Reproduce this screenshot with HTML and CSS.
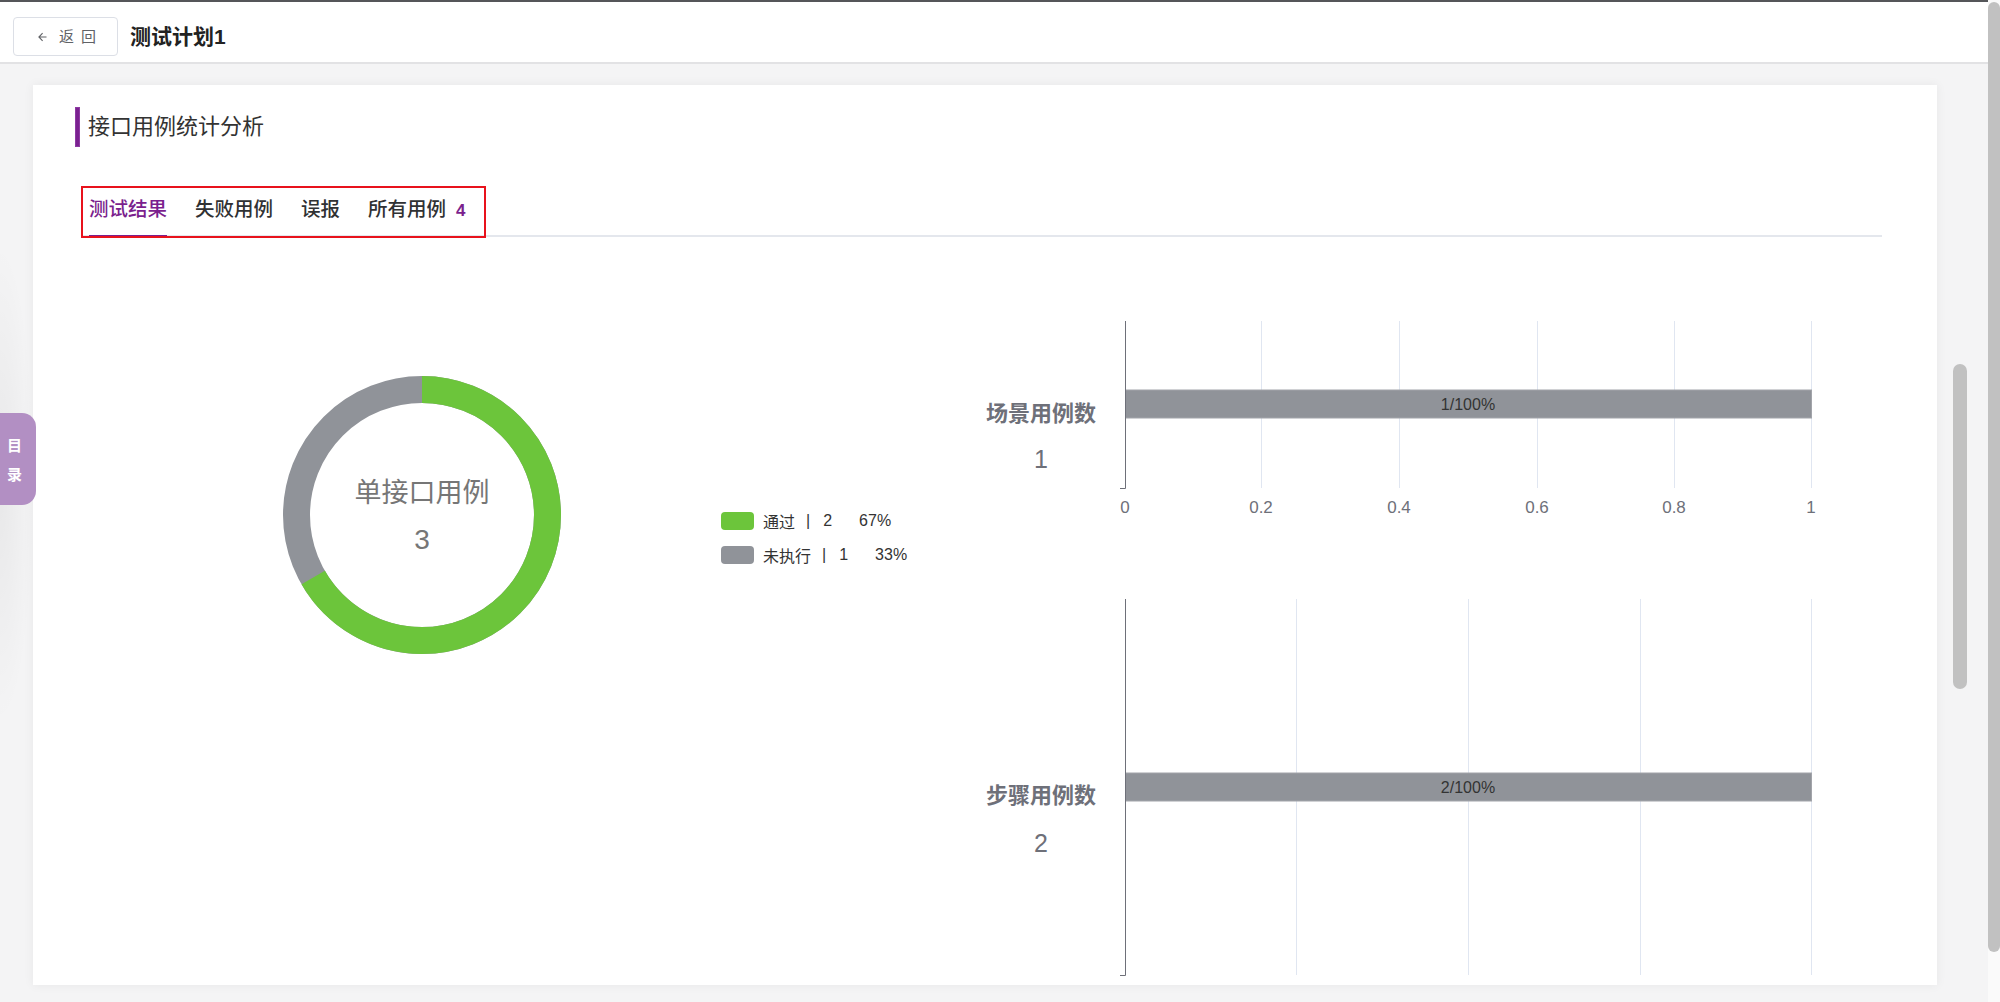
FILE: index.html
```html
<!DOCTYPE html>
<html lang="zh-CN">
<head>
<meta charset="utf-8">
<title>测试计划1</title>
<link rel="stylesheet" href="styles.css">
</head>
<body>
<div class="app">
  <header class="topbar">
    <button class="back-btn" type="button">
      <svg class="back-icon" width="9" height="10" viewBox="0 0 9 10"><path d="M8.5 5H1 M4.6 1.2L0.9 5l3.7 3.8" fill="none" stroke="#606266" stroke-width="1.1"/></svg>
      <span class="back-text">返回</span>
    </button>
    <h1 class="page-title">测试计划1</h1>
  </header>
  <main class="content">
    <div class="catalog-tab"><span>目</span><span>录</span></div>
    <section class="card">
      <div class="section-title"><span class="title-bar"></span><span class="title-text">接口用例统计分析</span></div>
      <nav class="tabs">
        <div class="tab active"><span class="tab-label">测试结果</span></div>
        <div class="tab"><span class="tab-label">失败用例</span></div>
        <div class="tab"><span class="tab-label">误报</span></div>
        <div class="tab"><span class="tab-label">所有用例<span class="tab-count">4</span></span></div>
        <div class="tabs-highlight"></div>
      </nav>
      <div class="charts">
        <div class="pie-panel">
          <svg class="donut" width="280" height="280" viewBox="0 0 280 280">
            <circle cx="140" cy="140" r="125.5" fill="none" stroke="#909399" stroke-width="27"/>
            <circle cx="140" cy="140" r="125.5" fill="none" stroke="#6cc53b" stroke-width="27" stroke-dasharray="525.7 1000" transform="rotate(-90 140 140)"/>
            <text class="donut-label" x="140" y="127" text-anchor="middle">单接口用例</text>
            <text class="donut-value" x="140" y="174" text-anchor="middle">3</text>
          </svg>
          <ul class="legend">
            <li class="legend-item"><span class="swatch swatch-pass"></span><span class="legend-name">通过</span><span class="legend-sep">|</span><span class="legend-val">2</span><span class="legend-pct">67%</span></li>
            <li class="legend-item"><span class="swatch swatch-none"></span><span class="legend-name">未执行</span><span class="legend-sep">|</span><span class="legend-val">1</span><span class="legend-pct">33%</span></li>
          </ul>
        </div>
        <div class="bar-panel">
          <svg class="bar-chart bar-chart-1" width="900" height="225" viewBox="0 0 900 225">
            <g class="grid">
              <line x1="308.5" y1="21" x2="308.5" y2="188"/>
              <line x1="446.5" y1="21" x2="446.5" y2="188"/>
              <line x1="584.5" y1="21" x2="584.5" y2="188"/>
              <line x1="721.5" y1="21" x2="721.5" y2="188"/>
              <line x1="858.5" y1="21" x2="858.5" y2="188"/>
            </g>
            <rect class="bar" x="172.5" y="90" width="686" height="28"/>
            <text class="bar-text" x="515" y="110" text-anchor="middle">1/100%</text>
            <line class="axis" x1="172.5" y1="21" x2="172.5" y2="188.5"/>
            <line class="axis" x1="167" y1="188.5" x2="172.5" y2="188.5"/>
            <text class="cat-label" x="88" y="120.5" text-anchor="middle">场景用例数</text>
            <text class="cat-value" x="88" y="168" text-anchor="middle">1</text>
            <g class="x-labels">
              <text x="172" y="213" text-anchor="middle">0</text>
              <text x="308" y="213" text-anchor="middle">0.2</text>
              <text x="446" y="213" text-anchor="middle">0.4</text>
              <text x="584" y="213" text-anchor="middle">0.6</text>
              <text x="721" y="213" text-anchor="middle">0.8</text>
              <text x="858" y="213" text-anchor="middle">1</text>
            </g>
          </svg>
          <svg class="bar-chart bar-chart-2" width="900" height="405" viewBox="0 0 900 405">
            <g class="grid">
              <line x1="343.5" y1="19" x2="343.5" y2="395"/>
              <line x1="515.5" y1="19" x2="515.5" y2="395"/>
              <line x1="687.5" y1="19" x2="687.5" y2="395"/>
              <line x1="858.5" y1="19" x2="858.5" y2="395"/>
            </g>
            <rect class="bar" x="172.5" y="193" width="686" height="28"/>
            <text class="bar-text" x="515" y="213" text-anchor="middle">2/100%</text>
            <line class="axis" x1="172.5" y1="19" x2="172.5" y2="395.5"/>
            <line class="axis" x1="167" y1="395.5" x2="172.5" y2="395.5"/>
            <text class="cat-label" x="88" y="222.5" text-anchor="middle">步骤用例数</text>
            <text class="cat-value" x="88" y="272" text-anchor="middle">2</text>
          </svg>
        </div>
      </div>
    </section>
    <div class="inner-scroll-thumb"></div>
  </main>
</div>
<div class="page-scrollbar"><div class="page-scroll-thumb"></div></div>
</body>
</html>
```
FILE: styles.css
```css
* { box-sizing: border-box; }
html, body { margin: 0; padding: 0; }
body {
  width: 2000px;
  height: 1002px;
  overflow: hidden;
  display: flex;
  font-family: "Liberation Sans", "Noto Sans CJK SC", sans-serif;
  color: #303133;
  background: #fff;
}
.app {
  flex: 1;
  display: flex;
  flex-direction: column;
  min-width: 0;
}
.topbar {
  height: 64px;
  border-top: 2px solid #555659;
  border-bottom: 2px solid #e2e2e4;
  background: #fff;
  display: flex;
  align-items: flex-start;
  padding: 15px 0 0 13px;
  position: relative;
  z-index: 2;
}
.back-btn {
  height: 39px;
  width: 105px;
  border: 1px solid #dcdfe6;
  border-radius: 4px;
  background: #fff;
  display: flex;
  align-items: center;
  padding: 0 0 0 24px;
  font-family: "Liberation Sans", "Noto Sans CJK SC", sans-serif;
  font-size: 15px;
  color: #606266;
  cursor: pointer;
}
.back-icon { display: block; margin-top: 1px; }
.back-text {
  margin-left: 12px;
  letter-spacing: 7px;
  line-height: 20px;
}
.page-title {
  margin: 0 0 0 12px;
  font-size: 21px;
  font-weight: 700;
  color: #222;
  line-height: 39px;
}
.content {
  flex: 1;
  position: relative;
  background: #f4f4f5 radial-gradient(ellipse 34px 240px at 0 420px, rgba(0,0,0,0.05), rgba(0,0,0,0));
  padding: 21px 51px 0 33px;
}
.card {
  background: #fff;
  height: 900px;
  box-shadow: 0 0 10px rgba(0,0,0,0.06);
  padding: 22px 55px 0 42px;
  display: flex;
  flex-direction: column;
}
.section-title {
  display: flex;
  align-items: center;
  height: 40px;
}
.title-bar {
  width: 5px;
  height: 40px;
  background: #7a2190;
  border: 1px solid #8e3aa3;
}
.title-text {
  margin-left: 8px;
  font-size: 22px;
  color: #333;
  line-height: 30px;
  margin-top: -1px;
}
.tabs {
  position: relative;
  display: flex;
  gap: 28px;
  margin: 39px 0 0 8px;
  padding-left: 6px;
  border-bottom: 2px solid #e4e7ed;
}
.tab {
  position: relative;
  height: 49px;
  display: flex;
  align-items: center;
  padding-bottom: 7px;
  font-size: 19.5px;
  font-weight: 500;
  color: #303133;
}
.tab-label { white-space: nowrap; }
.tab.active { color: #7b1f8e; }
.tab.active::after {
  content: "";
  position: absolute;
  left: 0;
  right: 0;
  bottom: -2px;
  height: 2px;
  background: #7b1f8e;
}
.tab-count {
  margin-left: 10px;
  font-size: 17px;
  font-weight: 700;
  color: #7b1f8e;
}
.tabs-highlight {
  position: absolute;
  left: -2px;
  top: 0;
  width: 405px;
  height: 52px;
  border: 2px solid #e8121c;
  pointer-events: none;
}
.charts {
  display: flex;
  margin-left: -42px;
  margin-right: -55px;
  flex: 1;
}
.pie-panel {
  width: 920px;
  display: flex;
  align-items: flex-start;
}
.donut {
  display: block;
  margin: 138px 0 0 249px;
}
.donut-label {
  font-family: "Noto Sans CJK SC", sans-serif;
  font-size: 27px;
  fill: #767676;
}
.donut-value {
  font-family: "Liberation Sans", sans-serif;
  font-size: 28px;
  fill: #767676;
}
.legend {
  list-style: none;
  margin: 267px 0 0 159px;
  padding: 0;
}
.legend-item {
  height: 34px;
  display: flex;
  align-items: center;
  font-size: 16px;
  color: #333;
  white-space: nowrap;
}
.swatch {
  width: 33px;
  height: 18px;
  border-radius: 4px;
  margin-right: 9px;
}
.swatch-pass { background: #6cc53b; }
.swatch-none { background: #909399; }
.legend-sep {
  margin: 0 13px 0 11px;
  color: #333;
}
.legend-pct { margin-left: 27px; }
.bar-panel {
  flex: 1;
  display: flex;
  flex-direction: column;
}
.bar-chart { display: block; }
.bar-chart-1 { margin-top: 63px; }
.bar-chart-2 { margin-top: 55px; }
.grid line {
  stroke: #e0e6f1;
  stroke-width: 1;
}
.axis {
  stroke: #6e7079;
  stroke-width: 1;
}
.bar {
  fill: #909399;
  stroke: #a2a4aa;
  stroke-width: 1;
}
.bar-text {
  font-family: "Liberation Sans", sans-serif;
  font-size: 16px;
  fill: #333;
}
.cat-label {
  font-family: "Noto Sans CJK SC", sans-serif;
  font-size: 22px;
  font-weight: 700;
  fill: #6e7079;
}
.cat-value {
  font-family: "Liberation Sans", sans-serif;
  font-size: 25px;
  fill: #6e7079;
}
.x-labels text {
  font-family: "Liberation Sans", sans-serif;
  font-size: 17px;
  fill: #6e7079;
}
.catalog-tab {
  position: absolute;
  left: 0;
  top: 349px;
  width: 36px;
  height: 92px;
  background: #b28fc3;
  border-radius: 0 14px 14px 0;
  display: flex;
  flex-direction: column;
  justify-content: center;
  padding-left: 7px;
  color: #fff;
  font-size: 15px;
  font-weight: 700;
  line-height: 29px;
  font-family: "Noto Sans CJK SC", sans-serif;
  z-index: 3;
}
.inner-scroll-thumb {
  position: absolute;
  left: 1953px;
  top: 300px;
  width: 14px;
  height: 325px;
  border-radius: 7px;
  background: #c1c1c1;
}
.page-scrollbar {
  width: 12px;
  background: #fafafa;
  flex-shrink: 0;
}
.page-scroll-thumb {
  margin-top: 2px;
  height: 950px;
  width: 12px;
  border-radius: 6px;
  background: #c1c1c1;
}
```
